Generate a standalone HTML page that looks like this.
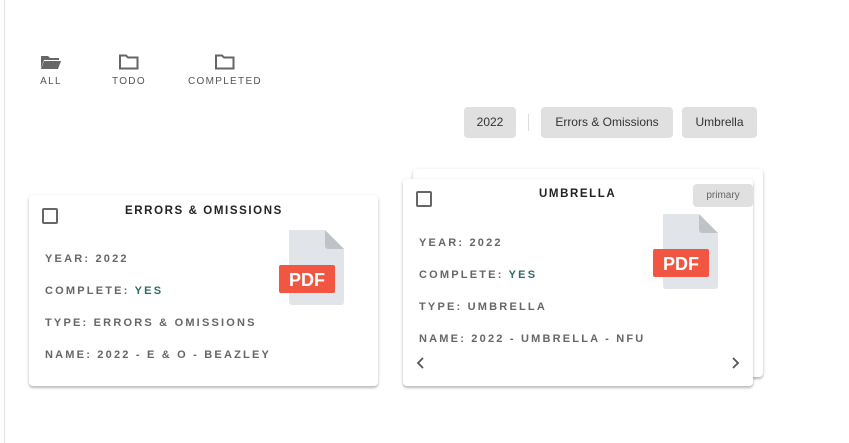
<!DOCTYPE html>
<html><head><style>
body{margin:0;width:849px;height:443px;background:#fff;font-family:"Liberation Sans",sans-serif;position:relative;overflow:hidden}
.vl{position:absolute;left:4px;top:0;width:1px;height:443px;background:#e4e4e4}
.tab{position:absolute;top:54px;text-align:center;font-size:10px;letter-spacing:1.3px;color:#555}
.tab svg{display:block;margin:0 auto 6px}
.chip{position:absolute;top:107px;height:31px;line-height:31px;background:#e0e0e0;border-radius:4px;font-size:12px;color:#333;text-align:center}
.card{position:absolute;background:#fff;border-radius:4px;box-shadow:0 2px 2px rgba(0,0,0,.2),0 1px 4px rgba(0,0,0,.12)}
.cb{position:absolute;width:12px;height:12px;border:2px solid #666;border-radius:2px}
.title{position:absolute;font-size:11.5px;letter-spacing:1.6px;color:#222;font-weight:bold}
.row{position:absolute;font-size:11px;letter-spacing:2.2px;color:#666;white-space:nowrap;font-weight:bold}
.yes{color:#2e6b66}
.pdf{position:absolute}
</style></head><body>
<div class="vl"></div>
<div class="tab" style="left:40px"><svg width="22" height="16" viewBox="0 0 22 16"><path d="M1 2h7l2 2h9v2H4L1 14z" fill="#666"/><path d="M4 7h17l-3 8H1z" fill="#666"/></svg>ALL</div>
<div class="tab" style="left:112px"><svg width="22" height="16" viewBox="0 0 22 16"><path d="M2 1.5h6l2 2h9.5v11h-17.5z" fill="none" stroke="#666" stroke-width="2"/></svg>TODO</div>
<div class="tab" style="left:188px"><svg width="22" height="16" viewBox="0 0 22 16"><path d="M2 1.5h6l2 2h9.5v11h-17.5z" fill="none" stroke="#666" stroke-width="2"/></svg>COMPLETED</div>
<div class="chip" style="left:464px;width:52px">2022</div>
<div style="position:absolute;left:528px;top:114px;width:1px;height:17px;background:#ddd"></div>
<div class="chip" style="left:541px;width:132px">Errors &amp; Omissions</div>
<div class="chip" style="left:682px;width:75px">Umbrella</div>

<div class="card" style="left:29px;top:195px;width:349px;height:191px">
<div class="cb" style="left:13px;top:13px"></div>
<div class="title" style="left:96px;top:10px">ERRORS &amp; OMISSIONS</div>
<svg class="pdf" style="left:250px;top:35px" width="66" height="75" viewBox="0 0 66 75"><path d="M10 0h36l19 19v53a3 3 0 0 1-3 3H13a3 3 0 0 1-3-3z" fill="#e1e4e8"/><path d="M46 0v16a3 3 0 0 0 3 3h16z" fill="#bfc3c8"/><rect x="0" y="35" width="56" height="28" rx="2" fill="#f15642"/><text x="28" y="56" text-anchor="middle" font-family="Liberation Sans" font-weight="bold" font-size="18" fill="#fff">PDF</text></svg>
<div class="row" style="left:16px;top:58px">YEAR: 2022</div>
<div class="row" style="left:16px;top:90px">COMPLETE: <span class="yes">YES</span></div>
<div class="row" style="left:16px;top:122px">TYPE: ERRORS &amp; OMISSIONS</div>
<div class="row" style="left:16px;top:154px">NAME: 2022 - E &amp; O - BEAZLEY</div>
</div>

<div class="card" style="left:413px;top:169px;width:350px;height:208px"></div>
<div class="card" style="left:403px;top:179px;width:350px;height:207px">
<div class="cb" style="left:13px;top:12px"></div>
<div class="title" style="left:136px;top:9px">UMBRELLA</div>
<div style="position:absolute;left:290px;top:5px;width:60px;height:23px;line-height:23px;background:#e0e0e0;border-radius:4px;font-size:10px;color:#666;text-align:center">primary</div>
<svg class="pdf" style="left:250px;top:35px" width="66" height="75" viewBox="0 0 66 75"><path d="M10 0h36l19 19v53a3 3 0 0 1-3 3H13a3 3 0 0 1-3-3z" fill="#e1e4e8"/><path d="M46 0v16a3 3 0 0 0 3 3h16z" fill="#bfc3c8"/><rect x="0" y="35" width="56" height="28" rx="2" fill="#f15642"/><text x="28" y="56" text-anchor="middle" font-family="Liberation Sans" font-weight="bold" font-size="18" fill="#fff">PDF</text></svg>
<div class="row" style="left:16px;top:58px">YEAR: 2022</div>
<div class="row" style="left:16px;top:90px">COMPLETE: <span class="yes">YES</span></div>
<div class="row" style="left:16px;top:122px">TYPE: UMBRELLA</div>
<div class="row" style="left:16px;top:154px">NAME: 2022 - UMBRELLA - NFU</div>
<svg style="position:absolute;left:13px;top:178px" width="10" height="12" viewBox="0 0 10 12"><path d="M7 1L2 6l5 5" fill="none" stroke="#555" stroke-width="1.8"/></svg>
<svg style="position:absolute;left:327px;top:178px" width="10" height="12" viewBox="0 0 10 12"><path d="M3 1l5 5-5 5" fill="none" stroke="#555" stroke-width="1.8"/></svg>
</div>
</body></html>
